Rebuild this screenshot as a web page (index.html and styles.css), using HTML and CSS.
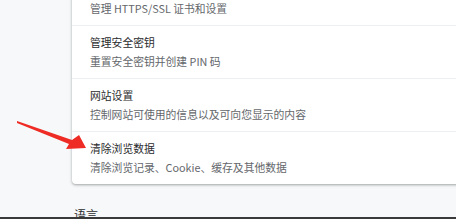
FILE: index.html
```html
<!DOCTYPE html>
<html lang="zh-CN">
<head>
<meta charset="utf-8">
<link rel="stylesheet" href="styles.css">
</head>
<body>
<div class="page">
  <section class="card">
    <div class="row first">
      <div class="title">管理证书</div>
      <div class="sub">管理 HTTPS/SSL 证书和设置</div>
    </div>
    <div class="row">
      <div class="title">管理安全密钥</div>
      <div class="sub">重置安全密钥并创建 PIN 码</div>
    </div>
    <div class="row">
      <div class="title">网站设置</div>
      <div class="sub">控制网站可使用的信息以及可向您显示的内容</div>
    </div>
    <div class="row">
      <div class="title">清除浏览数据</div>
      <div class="sub">清除浏览记录、Cookie、缓存及其他数据</div>
    </div>
  </section>
  <h2 class="heading">语言</h2>
</div>
<svg class="arrow" width="100" height="60" viewBox="0 0 100 60">
  <polygon points="16,0 71,19 78,14 85,27 65,28 68,23 16,2" fill="#ee2b24"/>
</svg>
<div class="taskbar"></div>
</body>
</html>
```
FILE: styles.css
```css
html, body {
  margin: 0;
  padding: 0;
  width: 456px;
  height: 219px;
  overflow: hidden;
  background: #f7f8f9;
  font-family: "Microsoft YaHei", "Noto Sans CJK SC", "Liberation Sans", sans-serif;
}
.page {
  margin-top: -28px;
  padding-left: 72px;
}
.card {
  width: 600px;
  background: #fff;
  border-radius: 4px;
  box-shadow: 0 1px 2px rgba(60, 64, 67, 0.3), 0 1px 3px 1px rgba(60, 64, 67, 0.12);
}
.row {
  padding: 8px 18px 8px;
  border-top: 1px solid #eeeff0;
  display: flex;
  flex-direction: column;
  gap: 2px;
}
.row.first {
  border-top: none;
  padding-top: 9px;
}
.title {
  font-size: 10.8px;
  line-height: 17px;
  color: #2a2b2d;
}
.sub {
  font-size: 10.8px;
  line-height: 17px;
  color: #64676b;
}
.heading {
  margin: 22px 0 0 2px;
  font-size: 12px;
  font-weight: 400;
  line-height: 17px;
  color: #2a2b2d;
}
.arrow {
  position: absolute;
  left: 1px;
  top: 121px;
}
.taskbar {
  position: absolute;
  left: 0;
  bottom: 0;
  width: 456px;
  height: 2px;
  background: #3a3a3a;
}
```
